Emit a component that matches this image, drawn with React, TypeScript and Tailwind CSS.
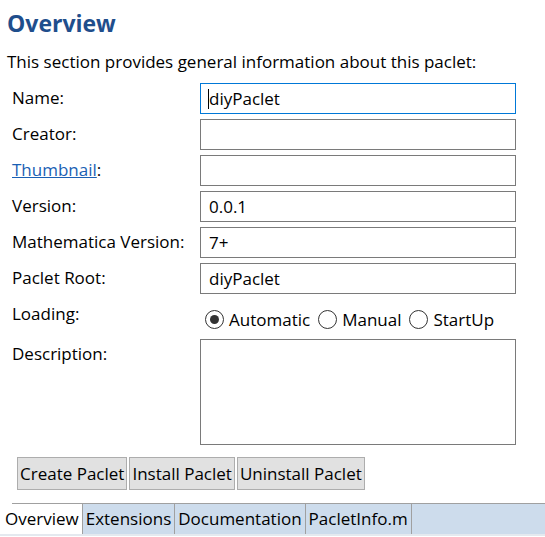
import React from "react";

const font = { fontFamily: '"Open Sans", "Noto Sans", sans-serif' };

function Field({ label, value, focused }: { label: React.ReactNode; value?: string; focused?: boolean }) {
  return (
    <div className="flex items-start h-[31px] mb-[5px]">
      <div className="w-[193px] pl-[5px] pt-[2px] text-[17px] text-black">{label}</div>
      <div
        className={`relative w-[316px] h-[31px] border flex items-center pl-[8px] text-[17px] text-black bg-white ${
          focused ? "border-[#0078d7]" : "border-[#7a7a7a]"
        }`}
      >
        {focused && <span className="absolute left-[7px] top-[5px] w-px h-[20px] bg-black" />}
        {value}
      </div>
    </div>
  );
}

function Radio({ label, checked }: { label: string; checked?: boolean }) {
  return (
    <div className="flex items-center">
      <span className="w-[19px] h-[19px] rounded-full border border-[#333] flex items-center justify-center bg-white">
        {checked && <span className="w-[9px] h-[9px] rounded-full bg-[#333]" />}
      </span>
      <span className="ml-[5px] mr-[8px] text-[17px] text-black">{label}</span>
    </div>
  );
}

export default function App() {
  return (
    <div className="w-[545px] h-[537px] bg-white overflow-hidden relative" style={font}>
      <div className="pl-[7px] pt-[8px]">
        <h1 className="text-[23px] font-bold text-[#1f4e8c] leading-[30px]">Overview</h1>
        <p className="mt-[13px] text-[17px] text-black leading-[22px]">
          This section provides general information about this paclet:
        </p>
      </div>

      <div className="pl-[7px] mt-[10px]">
        <Field label="Name:" value="diyPaclet" focused />
        <Field label="Creator:" />
        <Field
          label={
            <span>
              <a className="text-[#1a5fb4] underline cursor-pointer">Thumbnail</a>:
            </span>
          }
        />
        <Field label="Version:" value="0.0.1" />
        <Field label="Mathematica Version:" value="7+" />
        <Field label="Paclet Root:" value="diyPaclet" />

        <div className="flex items-start h-[40px]">
          <div className="w-[193px] pl-[5px] pt-[2px] text-[17px] text-black">Loading:</div>
          <div className="flex items-center pt-[8px] pl-[5px]">
            <Radio label="Automatic" checked />
            <Radio label="Manual" />
            <Radio label="StartUp" />
          </div>
        </div>

        <div className="flex items-start">
          <div className="w-[193px] pl-[5px] pt-[2px] text-[17px] text-black">Description:</div>
          <div className="w-[316px] h-[106px] border border-[#7a7a7a] bg-white" />
        </div>

        <div className="flex gap-[2px] mt-[12px] pl-[10px]">
          {["Create Paclet", "Install Paclet", "Uninstall Paclet"].map((b) => (
            <button
              key={b}
              className="h-[33px] px-[2px] bg-[#e1e1e1] border border-[#adadad] text-[17px] text-black"
            >
              {b}
            </button>
          ))}
        </div>
      </div>

      <div className="absolute left-0 right-0 top-[503px]">
        <div className="ml-[12px] h-px bg-[#a0a0a0]" />
        <div className="flex h-[30px] bg-[#cddcec]">
          {["Overview", "Extensions", "Documentation", "PacletInfo.m"].map((t, i) => (
            <div
              key={t}
              className={`h-full flex items-center px-[3px] text-[17px] text-black border-r border-[#a0a0a0] ${
                i === 0 ? "bg-white pl-[5px]" : ""
              }`}
            >
              {t}
            </div>
          ))}
        </div>
        <div className="h-[2px] bg-[#e4e9ef]" />
      </div>
    </div>
  );
}
